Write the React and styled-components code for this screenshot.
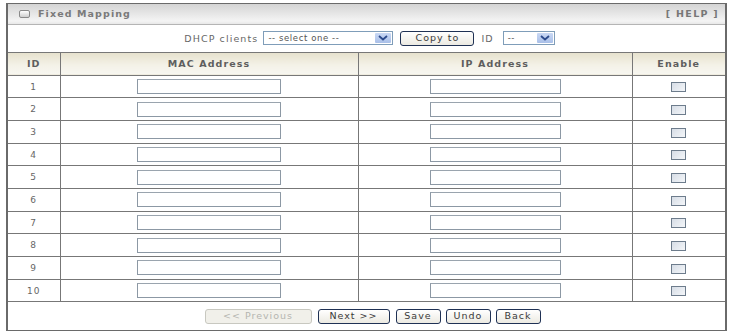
import React from "react";
import styled, { createGlobalStyle } from "styled-components";

const Global = createGlobalStyle`
  html, body { margin: 0; padding: 0; background: #fff; }
  body { font-family: "DejaVu Sans", Verdana, sans-serif; }
`;

const Panel = styled.div`
  margin: 3px 0 0 6px;
  width: 721px;
  height: 328px;
  box-sizing: border-box;
  border: 1px solid #6a6a6a;
  border-left-width: 2px;
  border-right-width: 2px;
  display: flex;
  flex-direction: column;
  font-size: 9.5px;
  letter-spacing: 1.1px;
  color: #666;
`;

const TitleBar = styled.div`
  height: 20px;
  display: flex;
  align-items: center;
  justify-content: space-between;
  padding: 0 6px 0 11px;
  background: linear-gradient(#d4d4d4, #f4f4f4 85%, #e8e8e8);
  border-bottom: 1px solid #b5b5b5;
`;

const Title = styled.div`
  display: flex;
  align-items: center;
  gap: 8px;
  font-weight: bold;
  color: #7a7a7a;
`;

const TitleIcon = styled.span`
  width: 9px;
  height: 6px;
  border: 1px solid #8a8a8a;
  border-radius: 2px;
  background: linear-gradient(#fff, #cfcfcf);
`;

const Help = styled.span`
  color: #777;
  font-weight: bold;
  letter-spacing: 1.3px;
`;

const Table = styled.table`
  border-collapse: collapse;
  width: 100%;
  table-layout: fixed;
  flex: 1;
`;

const Cell = styled.td`
  border: 1px solid #777;
  text-align: center;
  padding: 0;
  height: ${(p) => p.$h || "21.67px"};
  font-size: ${(p) => (p.$small ? "9px" : "inherit")};
  &:first-child { border-left: none; }
  &:last-child { border-right: none; }
`;

const Head = styled.th`
  border: 1px solid #777;
  height: 22px;
  padding: 0;
  font-weight: bold;
  color: #5e5e5e;
  background: linear-gradient(#e6e1cd, #f4f2e8 60%, #f7f6f0);
  &:first-child { border-left: none; }
  &:last-child { border-right: none; }
`;

const Toolbar = styled.div`
  display: flex;
  align-items: center;
  justify-content: center;
  gap: 5px;
  padding-left: 6px;
`;

const SelectBox = styled.div`
  display: flex;
  align-items: center;
  justify-content: space-between;
  width: ${(p) => p.$w}px;
  height: 14px;
  box-sizing: border-box;
  border: 1px solid #7f9db9;
  background: #fff;
  padding: 0 1px 0 4px;
  color: #555;
  font-size: 8.5px;
  letter-spacing: 0.6px;
  margin: ${(p) => p.$m || "0"};
`;

const Arrow = styled.span`
  width: 16px;
  height: 10px;
  border-radius: 1px;
  background: linear-gradient(#c9d8f4, #a9bfe8);
  display: flex;
  align-items: center;
  justify-content: center;
`;

const Btn = styled.button`
  font-family: "DejaVu Sans", Verdana, sans-serif;
  font-size: 9.5px;
  letter-spacing: 1px;
  height: 15px;
  padding: 0 ${(p) => p.$px || 6}px;
  border: 1px solid ${(p) => (p.disabled ? "#c8c8c0" : "#1f3154")};
  border-radius: 3px;
  background: ${(p) => (p.disabled ? "#f1f0ea" : "linear-gradient(#ffffff, #eceae2)")};
  color: ${(p) => (p.disabled ? "#b5b5b0" : "#3a3a3a")};
  line-height: 12px;
  width: ${(p) => p.$w}px;
  margin: ${(p) => p.$m || "0"};
`;

const TextInput = styled.span`
  display: inline-block;
  width: ${(p) => p.$w}px;
  height: 13px;
  border: 1px solid #8c98a4;
  border-top-color: #9aa4ae;
  background: #fff;
  vertical-align: middle;
`;

const Check = styled.span`
  display: inline-block;
  width: 13px;
  height: 8px;
  border: 1px solid #6d7c8c;
  background: linear-gradient(135deg, #d6dde6, #f4f6f9);
  vertical-align: middle;
`;

const Footer = styled.div`
  display: flex;
  align-items: center;
  justify-content: center;
  gap: 5px;
  height: 28px;
  padding-left: 12px;
`;

const Chevron = () => (
  <svg width="10" height="6" viewBox="0 0 10 6">
    <path d="M1 1 L5 4.5 L9 1" fill="none" stroke="#2b4a8c" strokeWidth="1.8" />
  </svg>
);

export default function App() {
  const rows = Array.from({ length: 10 }, (_, i) => i + 1);
  return (
    <>
      <Global />
      <Panel>
        <TitleBar>
          <Title>
            <TitleIcon />
            Fixed Mapping
          </Title>
          <Help>[ HELP ]</Help>
        </TitleBar>
        <Table>
          <colgroup>
            <col style={{ width: 52 }} />
            <col style={{ width: 298 }} />
            <col style={{ width: 274 }} />
            <col />
          </colgroup>
          <tbody>
            <tr>
              <Cell colSpan={4} $h="27px" style={{ borderTop: "none" }}>
                <Toolbar>
                  <span>DHCP clients</span>
                  <SelectBox $w={130}>
                    <span>-- select one --</span>
                    <Arrow>
                      <Chevron />
                    </Arrow>
                  </SelectBox>
                  <Btn $w={74} $m="0 2px 0 2px">Copy to</Btn>
                  <span>ID</span>
                  <SelectBox $w={52} $m="0 0 0 4px">
                    <span>--</span>
                    <Arrow>
                      <Chevron />
                    </Arrow>
                  </SelectBox>
                </Toolbar>
              </Cell>
            </tr>
            <tr>
              <Head>ID</Head>
              <Head>MAC Address</Head>
              <Head>IP Address</Head>
              <Head>Enable</Head>
            </tr>
            {rows.map((n) => (
              <tr key={n}>
                <Cell $small>{n}</Cell>
                <Cell>
                  <TextInput $w={142} />
                </Cell>
                <Cell>
                  <TextInput $w={129} />
                </Cell>
                <Cell>
                  <Check />
                </Cell>
              </tr>
            ))}
          </tbody>
        </Table>
        <Footer>
          <Btn disabled $w={107}>&lt;&lt; Previous</Btn>
          <Btn $w={72} $m="0 1px">Next &gt;&gt;</Btn>
          <Btn $w={45} $px={2}>Save</Btn>
          <Btn $w={45} $px={2}>Undo</Btn>
          <Btn $w={45} $px={2}>Back</Btn>
        </Footer>
      </Panel>
    </>
  );
}
